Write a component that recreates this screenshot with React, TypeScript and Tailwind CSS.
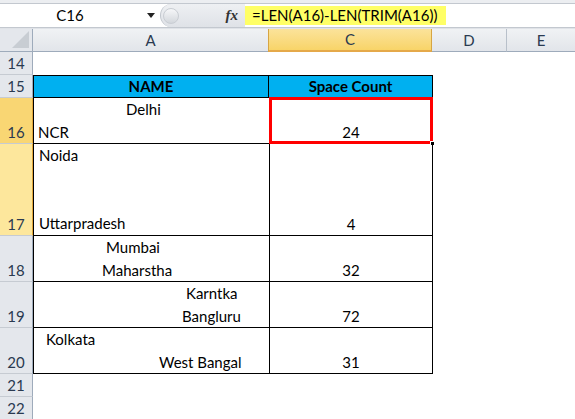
import React from 'react'

// 行数据：每行的高度、A列文字行（带左边距）和C列数值
type Line = { text: string; left: number }
type Row = { n: number; h: number; lines: Line[]; count?: string; header?: 'sel' | 'near' }

const rows: Row[] = [
  { n: 16, h: 46, header: 'sel', lines: [{ text: 'Delhi', left: 92 }, { text: 'NCR', left: 4 }], count: '24' },
  {
    n: 17,
    h: 92,
    header: 'near',
    lines: [
      { text: 'Noida', left: 5 },
      { text: '', left: 0 },
      { text: '', left: 0 },
      { text: 'Uttarpradesh', left: 5 },
    ],
    count: '4',
  },
  { n: 18, h: 46, lines: [{ text: 'Mumbai', left: 72 }, { text: 'Maharstha', left: 68 }], count: '32' },
  { n: 19, h: 46, lines: [{ text: 'Karntka', left: 152 }, { text: 'Bangluru', left: 148 }], count: '72' },
  { n: 20, h: 46, lines: [{ text: 'Kolkata', left: 12 }, { text: 'West Bangal', left: 125 }], count: '31' },
]

const font = { fontFamily: 'Lato, "Noto Sans", sans-serif' }

function RowHead({ n, h, kind }: { n: number; h: number; kind?: 'sel' | 'near' }) {
  const bg =
    kind === 'sel'
      ? 'bg-[#f9d673] border-r-[#e2a83c]'
      : kind === 'near'
        ? 'bg-[#fde79c] border-r-[#e2a83c]'
        : 'bg-[#e4e7ec] border-r-[#9eabbb]'
  return (
    <div
      className={`w-[33px] shrink-0 flex items-end justify-center border-r border-b border-b-[#c6cbd2] text-[15px] leading-[22px] text-[#2a3a50] ${bg}`}
      style={{ height: h }}
    >
      {n}
    </div>
  )
}

export default function App() {
  return (
    <div className="w-[575px] h-[419px] overflow-hidden bg-white text-black" style={font}>
      {/* 名称框和编辑栏 */}
      <div className="h-[4px] bg-[#eceef1] border-b border-[#c3c8cf]" />
      <div className="flex h-[24px] bg-white border-b border-[#c3c8cf]">
        <div className="w-[160px] relative flex items-center justify-center text-[15px]">
          <span className="-ml-[20px]">C16</span>
          <span className="absolute left-[147px] top-[9px] w-0 h-0 border-l-[4px] border-r-[4px] border-t-[5px] border-l-transparent border-r-transparent border-t-[#222]" />
        </div>
        <div className="w-[85px] flex items-center bg-gradient-to-b from-[#eef0f3] to-[#dfe2e7] rounded-l-full border-l border-[#c0c5cc] pl-[2px]">
          <div className="w-[16px] h-[16px] rounded-full bg-gradient-to-b from-[#f6f7f9] to-[#d3d7dc] border border-[#c9cdd3]" />
          <span className="ml-auto mr-[7px] text-[15px] italic font-bold text-[#333]" style={{ fontFamily: '"Liberation Serif", serif' }}>
            fx
          </span>
        </div>
        <div className="flex-1 flex items-center">
          <span className="h-[19px] bg-[#ffff66] pl-[7px] pr-[9px] text-[15px] leading-[19px] whitespace-nowrap">
            =LEN(A16)-LEN(TRIM(A16))
          </span>
        </div>
      </div>
      <div className="h-[1px] bg-[#e0e3e8]" />

      {/* 列标题 */}
      <div className="flex h-[23px] text-[15px] text-[#2a3a50]">
        <div className="w-[33px] relative bg-[#e4e7ec] border-r border-b border-[#9eabbb]">
          <svg className="absolute right-[3px] bottom-[3px]" width="17" height="17" viewBox="0 0 17 17">
            <polygon points="17,0 17,17 0,17" fill="#c8cdd3" />
          </svg>
        </div>
        <div className="w-[236px] flex items-center justify-center bg-gradient-to-b from-[#f0f2f4] to-[#e2e5ea] border-r border-b border-r-[#b8c0ca] border-b-[#9eabbb]">
          A
        </div>
        <div className="w-[164px] flex items-center justify-center bg-gradient-to-b from-[#fbe39a] to-[#f8d468] border-l border-[#d7a542] border-r border-b-2 border-b-[#e5a94a] -ml-[1px]">
          C
        </div>
        <div className="w-[75px] flex items-center justify-center bg-gradient-to-b from-[#f0f2f4] to-[#e2e5ea] border-r border-b border-r-[#b8c0ca] border-b-[#9eabbb]">
          D
        </div>
        <div className="flex-1 flex items-center justify-center bg-gradient-to-b from-[#f0f2f4] to-[#e2e5ea] border-b border-[#9eabbb]">
          E
        </div>
      </div>

      {/* 第14行 */}
      <div className="flex">
        <RowHead n={14} h={23} />
        <div className="flex-1 h-[23px]" />
      </div>

      {/* 第15行：表头 */}
      <div className="flex text-[15px]">
        <RowHead n={15} h={23} />
        <div className="w-[236px] h-[23px] bg-[#00b0f0] border border-black flex items-center justify-center font-bold">
          NAME
        </div>
        <div className="w-[164px] h-[23px] bg-[#00b0f0] border-t border-r border-b border-black flex items-center justify-center font-bold">
          Space Count
        </div>
      </div>

      {/* 数据行 */}
      {rows.map(r => (
        <div key={r.n} className="flex text-[15px]">
          <RowHead n={r.n} h={r.h} kind={r.header} />
          <div className="w-[236px] border-l border-b border-black flex flex-col justify-end" style={{ height: r.h }}>
            {r.lines.map((l, i) => (
              <div key={i} className="h-[23px] leading-[22px] whitespace-nowrap" style={{ paddingLeft: l.left }}>
                {l.text}
              </div>
            ))}
          </div>
          <div
            className="relative w-[164px] border-l border-r border-b border-black flex items-end justify-center leading-[22px]"
            style={{ height: r.h }}
          >
            {r.count}
            {r.n === 16 && (
              <>
                <div className="absolute -left-[1px] -top-[1px] -right-[1px] -bottom-[1px] border-[3px] border-[#ff0000]" />
                <div className="absolute -right-[3px] -bottom-[3px] w-[5px] h-[5px] bg-black border border-white" />
              </>
            )}
          </div>
        </div>
      ))}

      {/* 第21、22行 */}
      <div className="flex">
        <RowHead n={21} h={23} />
      </div>
      <div className="flex">
        <RowHead n={22} h={23} />
      </div>
    </div>
  )
}
